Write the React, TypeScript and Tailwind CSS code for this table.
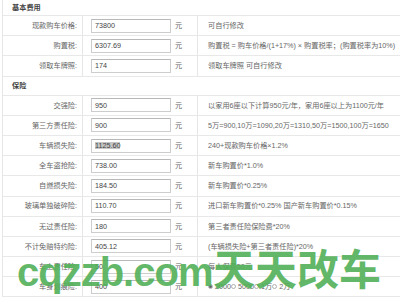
const font = "font-[family-name:'Liberation_Sans','Noto_Sans_CJK_SC',sans-serif]";

type Row = {
  label: string;
  value: string;
  note?: string;
  selected?: boolean;
  radios?: boolean;
};

const basic: Row[] = [
  { label: "现款购车价格:", value: "73800", note: "可自行修改" },
  { label: "购置税:", value: "6307.69", note: "购置税 = 购车价格/(1+17%) × 购置税率；(购置税率为10%)" },
  { label: "领取车牌照:", value: "174", note: "领取车牌照 可自行修改" },
];

const insurance: Row[] = [
  { label: "交强险:", value: "950", note: "以家用6座以下计算950元/年，家用6座以上为1100元/年" },
  { label: "第三方责任险:", value: "900", note: "5万=900,10万=1090,20万=1310,50万=1500,100万=1650" },
  { label: "车辆损失险:", value: "1125.60", note: "240+现款购车价格×1.2%", selected: true },
  { label: "全车盗抢险:", value: "738.00", note: "新车购置价*1.0%" },
  { label: "自燃损失险:", value: "184.50", note: "新车购置价*0.25%" },
  { label: "玻璃单独破碎险:", value: "110.70", note: "进口新车购置价*0.25% 国产新车购置价*0.15%" },
  { label: "无过责任险:", value: "180", note: "第三者责任险保险费*20%" },
  { label: "不计免赔特约险:", value: "405.12", note: "(车辆损失险+第三者责任险)*20%" },
  { label: "车上责任险:", value: "50", note: "每人保费50元" },
  { label: "车身划痕险:", value: "400", radios: true },
];

const Radio = ({ on }: { on?: boolean }) => (
  <span className="inline-flex h-[5px] w-[5px] items-center justify-center rounded-full border border-[#b0b0b0] bg-white">
    {on && <span className="h-[3px] w-[3px] rounded-full bg-[#666]" />}
  </span>
);

const FeeRow = ({ row }: { row: Row }) => (
  <div className="flex h-[20.2px] items-stretch border-b border-[#e8e8e8]">
    <div className="flex w-[80px] items-center justify-end border-r border-[#e6e6e6] pr-[5px] text-[#666]">
      {row.label}
    </div>
    <div className="flex w-[115px] items-center border-r border-[#e6e6e6] pl-[8px]">
      <div className="flex h-[14px] w-[80px] items-center border border-[#cdcdcd] border-t-[#b8b8b8] bg-white pl-[3px] text-[#444]">
        {row.selected ? <span className="bg-[#c6c6c6]">{row.value}</span> : row.value}
      </div>
      <span className="ml-[4px] text-[#666]">元</span>
    </div>
    <div className="flex flex-1 items-center whitespace-nowrap pl-[10px] text-[#666]">
      {row.radios ? (
        <div className="flex items-center">
          <Radio on />
          <span className="ml-[2px]">2000</span>
          <Radio />
          <span className="ml-[2px]">5000</span>
          <Radio />
          <span className="ml-[2px]">1万</span>
          <Radio />
          <span className="ml-[2px]">2万</span>
        </div>
      ) : (
        row.note
      )}
    </div>
  </div>
);

const Section = ({ title, h }: { title: string; h: string }) => (
  <div className={`flex ${h} items-center border-b border-[#e8e8e8] pl-[9px] font-bold text-[#444]`}>
    {title}
  </div>
);

export default function App() {
  return (
    <div className={`relative h-[297px] w-[400px] overflow-hidden bg-white text-[7.2px] leading-none ${font}`}>
      <div className="ml-[2px] border-l border-[#e6e6e6]">
        <Section title="基本费用" h="h-[16px]" />
        {basic.map((r) => (
          <FeeRow key={r.label} row={r} />
        ))}
        <Section title="保险" h="h-[19px]" />
        {insurance.map((r) => (
          <FeeRow key={r.label} row={r} />
        ))}
      </div>

      {/* watermark from the source screenshot */}
      <div className="pointer-events-none absolute left-[17px] top-[252px] whitespace-nowrap text-[40px] leading-none font-bold tracking-[-1px] text-[#52b058] opacity-90">
        cqzzb.com
      </div>
      <div className="pointer-events-none absolute left-[213px] top-[246px] whitespace-nowrap text-[42px] leading-none font-bold text-[#52b058] opacity-90 font-[family-name:'Noto_Sans_CJK_SC',sans-serif]">
        天天改车
      </div>
    </div>
  );
}
